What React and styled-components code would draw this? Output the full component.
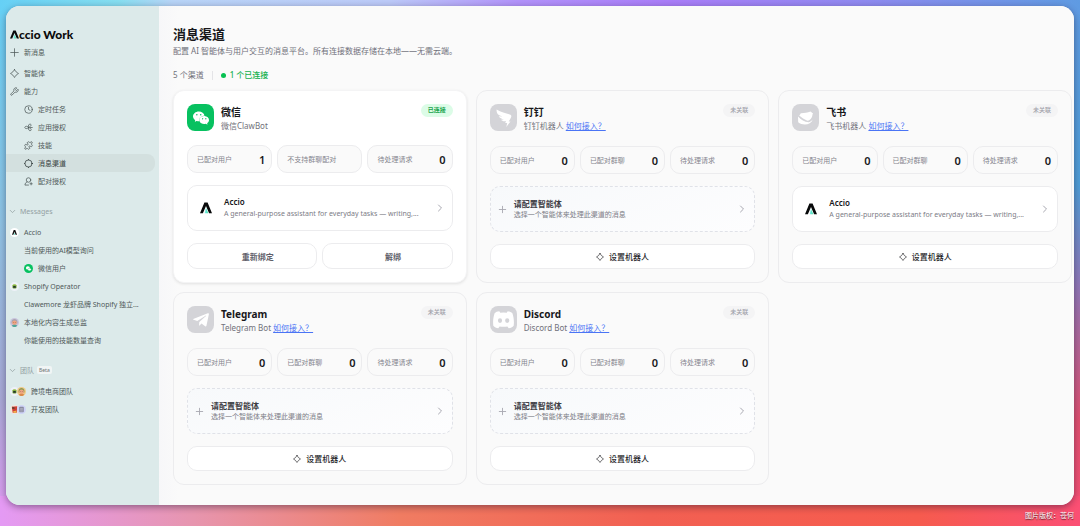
import React from 'react';
import styled, { createGlobalStyle, css } from 'styled-components';
import { ChevronDown, ChevronRight, Clock, Plus, Puzzle, Wrench } from 'lucide-react';
import { FaTelegramPlane } from 'react-icons/fa';
import { SiWechat } from 'react-icons/si';

const GlobalStyle = createGlobalStyle`
  * {
    box-sizing: border-box;
  }

  body {
    margin: 0;
    font-family: 'Noto Sans', 'Noto Sans CJK SC', sans-serif;
    font-size: 8px;
    color: #18181b;
  }

  button {
    font: inherit;
    color: inherit;
    cursor: pointer;
  }

  svg {
    display: block;
    flex: none;
  }

  h1, h2, p, ul {
    margin: 0;
    padding: 0;
  }
`;

const Desktop = styled.div`
  display: flex;
  flex-direction: column;
  min-height: 100vh;
  padding: 6px 6px 0;
  background:
    linear-gradient(90deg, #66d0f5 0%, #86def0 11%, #b8d4f7 16%, #bccaf8 36%, #b292fa 48%, #a97df8 62%, #8f8af0 80%, #5f9be2 100%) top / 100% 14px no-repeat,
    linear-gradient(90deg, #e49af4 0%, #e795ae 18%, #f07c62 37%, #f26052 60%, #f65b4e 85%, #fb4f74 100%) bottom / 100% 30px no-repeat,
    linear-gradient(180deg, #66d0f5 0%, #8fc4e4 42%, #a9a9d6 76%, #e49af4 100%) left / 50% 100% no-repeat,
    linear-gradient(180deg, #5f9be2 0%, #4f9fd8 35%, #8f78b8 54%, #e0506f 80%, #fb4f74 100%) right / 50% 100% no-repeat;
`;

const Window = styled.div`
  display: flex;
  flex: 1;
  overflow: hidden;
  border-radius: 14px;
  background: #fafafa;
  box-shadow: 0 2px 7px rgba(30, 20, 50, 0.45);
`;

const Credit = styled.footer`
  height: 21px;
  line-height: 21px;
  font-size: 7px;
  text-align: right;
  color: #fff;
  text-shadow: 0 1px 1px rgba(0, 0, 0, 0.7);
`;

const Sidebar = styled.nav`
  flex: none;
  width: 153px;
  padding: 20px 4px 12px 0;
  background: #dceaea;
`;

const Brand = styled.div`
  display: flex;
  align-items: center;
  height: 16px;
  margin-bottom: 1px;
  padding-left: 4px;
  font-family: Lato, 'Noto Sans', sans-serif;
  font-size: 12px;
  font-weight: 900;
  color: #0b0b0c;
`;

const NavGroup = styled.ul`
  list-style: none;
  margin-bottom: ${p => p.$gap || 3}px;
`;

const NavLink = styled.a`
  display: flex;
  align-items: center;
  gap: 5px;
  height: 18px;
  padding-left: ${p => (p.$level ? 18 : 4)}px;
  border-radius: 0 8px 8px 0;
  font-size: 7px;
  white-space: nowrap;
  text-decoration: none;
  color: #4f5959;

  ${p =>
    p.$active &&
    css`
      background: #d3e0df;
      color: #333c3c;
    `}
`;

const SectionButton = styled.button`
  display: flex;
  align-items: center;
  gap: 3px;
  height: 18px;
  margin-bottom: 3px;
  padding: 0 0 0 2px;
  border: 0;
  background: none;
  font-size: 7px;
  color: #93a0a2;
`;

const BetaTag = styled.span`
  padding: 0 2px;
  border-radius: 2px;
  background: #f1f5f5;
  font-size: 5px;
  line-height: 8px;
  color: #6b7272;
`;

const AvatarPair = styled.span`
  display: flex;

  svg + svg {
    margin-left: -2px;
  }
`;

const Main = styled.main`
  flex: 1;
  min-width: 0;
  padding: 19px 2px 20px 14px;
  background: linear-gradient(90deg, #f7f7f9, #fafafa 20px);
`;

const PageTitle = styled.h1`
  font-size: 13px;
  line-height: 18px;
  font-weight: 600;
`;

const PageIntro = styled.p`
  margin-top: 2px;
  line-height: 12px;
  color: #71717a;
`;

const Summary = styled.div`
  display: flex;
  align-items: center;
  margin: 12px 0 9px;
  line-height: 12px;
  color: #71717a;
`;

const Divider = styled.span`
  width: 1px;
  height: 9px;
  margin: 0 8px;
  background: #e4e4e7;
`;

const Connected = styled.span`
  display: flex;
  align-items: center;
  gap: 4px;
  font-weight: 500;
  color: #12b04c;

  &::before {
    content: '';
    width: 5px;
    height: 5px;
    border-radius: 50%;
    background: #07c152;
  }
`;

const Grid = styled.div`
  display: grid;
  grid-template-columns: repeat(3, minmax(0, 1fr));
  gap: 9px;
`;

const Card = styled.section`
  display: flex;
  flex-direction: column;
  gap: 12px;
  padding: 13px;
  border: 1px solid ${p => (p.$on ? '#f4f4f5' : '#ececee')};
  border-radius: 11px;
  background: ${p => (p.$on ? '#fff' : '#fafafa')};
  box-shadow: ${p => (p.$on ? '0 1px 3px rgba(0, 0, 0, 0.1)' : 'none')};
`;

const CardHeader = styled.header`
  display: flex;
  align-items: flex-start;
  gap: 7px;
`;

const Tile = styled.span`
  display: flex;
  align-items: center;
  justify-content: center;
  width: 27px;
  height: 27px;
  border-radius: 8px;
  background: ${p => (p.$on ? '#07c160' : '#d4d4d8')};
  color: #fff;
`;

const CardHeading = styled.div`
  flex: 1;
  min-width: 0;
`;

const CardTitle = styled.h2`
  font-size: 10px;
  line-height: 16px;
  font-weight: 700;
`;

const CardSub = styled.p`
  padding-bottom: ${p => (p.$linked ? 2 : 1)}px;
  line-height: 12px;
  color: #71717a;
`;

const HelpLink = styled.a`
  color: #4a74f5;
  text-decoration: underline;
`;

const Badge = styled.span`
  padding: 0 7px;
  border-radius: 7px;
  background: ${p => (p.$on ? '#dcfce7' : '#f4f4f5')};
  font-size: 6px;
  line-height: 13px;
  font-weight: ${p => (p.$on ? 700 : 500)};
  color: ${p => (p.$on ? '#16a34a' : '#a1a1aa')};
`;

const Stats = styled.div`
  display: grid;
  grid-template-columns: repeat(3, 1fr);
  gap: 5px;
`;

const Stat = styled.div`
  display: flex;
  align-items: center;
  justify-content: space-between;
  height: 28px;
  padding: 0 6px 0 9px;
  border: 1px solid #ececee;
  border-radius: 10px;
  background: #fafafa;
  font-size: 7px;
  color: #85858e;

  strong {
    font-size: 11px;
    font-weight: 600;
    color: #18181b;
  }
`;

const AgentButton = styled.button`
  display: flex;
  align-items: center;
  gap: ${p => (p.$empty ? 6 : 12)}px;
  height: 46px;
  padding: 0 6px 0 ${p => (p.$empty ? 6 : 12)}px;
  border: 1px ${p => (p.$empty ? 'dashed #e0e2e8' : 'solid #ececee')};
  border-radius: 10px;
  background: ${p => (p.$empty ? 'linear-gradient(160deg, #f7f9fb, #fdfdfe)' : '#fff')};
  text-align: left;
  color: #a8a8b1;
`;

const AgentText = styled.span`
  display: flex;
  flex: 1;
  flex-direction: column;
  min-width: 0;
  font-size: 7px;
  line-height: ${p => (p.$empty ? 11 : 12)}px;
  white-space: nowrap;
  color: #7c7c86;

  b {
    font-size: 8px;
    font-weight: 600;
    color: ${p => (p.$empty ? '#3f3f46' : '#18181b')};
  }
`;

const Actions = styled.div`
  display: flex;
  gap: 5px;
`;

const ActionButton = styled.button`
  display: flex;
  flex: 1;
  align-items: center;
  justify-content: center;
  gap: 5px;
  height: ${p => (p.$muted ? 26 : 25)}px;
  padding: 0 0 0 ${p => (p.$muted ? 11 : 0)}px;
  border: 1px solid #ececee;
  border-radius: 10px;
  background: #fff;
  font-weight: ${p => (p.$muted ? 600 : 500)};
  color: ${p => (p.$muted ? '#60606a' : '#27272a')};
`;

const AccioMark = ({ size = 12 }) => (
  <svg width={size} height={size} viewBox="0 0 24 24" aria-hidden="true">
    <defs>
      <linearGradient id="accio" x1="0" x2="1">
        <stop offset="0" stopColor="#7fe8f0" />
        <stop offset="1" stopColor="#3fe0a0" />
      </linearGradient>
    </defs>
    <path d="M8.800 1h6.400L24 22.500h-5.800L12 8 5.800 22.500H0z" fill="#08090a" />
    <path d="M12 11.500l4.600 11H9.400z" fill="url(#accio)" />
  </svg>
);

const StrokeIcon = ({ size = 9, width = 2, children }) => (
  <svg
    width={size}
    height={size}
    viewBox="0 0 24 24"
    fill="none"
    stroke="currentColor"
    strokeWidth={width}
    strokeLinecap="round"
    strokeLinejoin="round"
    aria-hidden="true"
  >
    {children}
  </svg>
);

const NewIcon = () => (
  <StrokeIcon>
    <path d="M12 2v20M2 12h20" />
  </StrokeIcon>
);

const AgentIcon = ({ size }) => (
  <StrokeIcon size={size}>
    <path d="M12 1.500c.8 0 1.200 1 1.700 2.300.9 2.500 4 5.600 6.500 6.500 1.300.5 2.300.9 2.300 1.700s-1 1.200-2.300 1.700c-2.500.9-5.600 4-6.500 6.500-.5 1.300-.9 2.300-1.700 2.300s-1.200-1-1.700-2.300c-.9-2.500-4-5.600-6.500-6.500-1.300-.5-2.300-.9-2.300-1.700s1-1.200 2.300-1.700c2.500-.9 5.600-4 6.500-6.500.5-1.300.9-2.300 1.700-2.300z" />
  </StrokeIcon>
);

const GrantIcon = () => (
  <StrokeIcon>
    <path d="M12 12C9 7 3 8 2 12c1 4 7 4 10 0zM12 12c-2-5 1-10 5-9 4 2 1 7-5 9zM12 12c6 1 9 5 6 8-4 2-7-2-6-8zM17 12h5" />
  </StrokeIcon>
);

const ChannelIcon = () => (
  <StrokeIcon>
    <circle cx="12" cy="12" r="9.500" />
    <path d="M12 1v1M12 22v1M1 12h1M22 12h1" />
  </StrokeIcon>
);

const PairIcon = () => (
  <StrokeIcon>
    <circle cx="12" cy="8" r="6" />
    <path d="M8 13c-3 1.500-5 4-5.500 8.500H12M19 15v6M16 18h6" />
  </StrokeIcon>
);

const TileIcon = ({ children }) => (
  <svg width="27" height="27" viewBox="0 0 27 27" fill="currentColor" aria-hidden="true">
    {children}
  </svg>
);

const DingTalkIcon = () => (
  <TileIcon>
    <path d="M6.600 5.400c4.300 2.500 9 3.700 13.200 5.200 1.500.6 1.800 1.300 1.300 2.600-.6 1.500-1.600 2.900-2.400 4.200h1.800l-4.200 5.600.9-4h-2l.9-2c-2 .6-3.800.2-5-1.200l2.900-.5c-2.400-.4-4.200-1.300-5.200-3.100l3.700.2C9.600 11.600 7.500 10.600 7 8.700c-.4-1-.5-2.200-.4-3.300z" />
  </TileIcon>
);

const FeishuIcon = () => (
  <TileIcon>
    <path d="M8.800 9.200c3.200.1 6.600-.8 9.700-1.700 1 .6 1.500 1.600 2.500 1.700-.7 1.500-.6 2.900-1.300 4.300-1 1.800-2.500 3-4.300 3.300C12 15.600 9 13 7.200 11.600c.7-.7 1.200-1.500 1.600-2.400z" />
    <path d="M6 12.500c3 3.300 6.600 5.500 10.500 5.700 1.700-.1 3.100-1.200 4.300-2.700-1.300 3.200-4.300 5-8 5-2.500 0-4.800-.7-6.600-2.200z" />
  </TileIcon>
);

const DiscordIcon = () => (
  <TileIcon>
    <path
      fillRule="evenodd"
      d="M9.300 5.300L10.300 6.800q3.200-.5 6.400 0l1-1.500c1.900.2 3.500.8 4.700 1.900 1.400 3.900 1.800 8.200 1.300 12.600-1.300 1.400-3 2.200-5 2.500l-1.300-1.900q-3.900.8-7.800 0l-1.300 1.900c-2-.3-3.700-1.100-5-2.500-.5-4.400-.1-8.700 1.300-12.600 1.200-1.100 2.800-1.700 4.700-1.900zM10 12.300a2.100 2.300 0 1 0 0 4.600 2.100 2.300 0 1 0 0-4.600zM17.200 12.300a2.100 2.300 0 1 0 0 4.600 2.100 2.300 0 1 0 0-4.600z"
    />
  </TileIcon>
);

const AccioAvatar = () => (
  <svg width="9" height="9" viewBox="0 0 18 18" aria-hidden="true">
    <circle cx="9" cy="9" r="9" fill="#fff" />
    <path d="M7.400 4h3.200l3.400 9.500h-2.800L9 7.500l-2.200 6H4z" fill="#111" />
    <path d="M9 9.500l1.500 4h-3z" fill="#5fdcc0" />
  </svg>
);

const OperatorAvatar = () => (
  <svg width="9" height="9" viewBox="0 0 20 20" aria-hidden="true">
    <circle cx="10" cy="10" r="10" fill="#eef1f8" />
    <path d="M5 9c0-5 10-5 10 0z" fill="#95bf47" />
    <rect x="5.500" y="7.500" width="9" height="7" rx="2.500" fill="#6e9d35" />
    <rect x="7" y="9" width="6" height="4" rx="1.500" fill="#24352b" />
  </svg>
);

const PersonAvatar = ({ hair = '#a9a4ad', shirt = '#4fa69b', back = '#c9c4dd' }) => (
  <svg width="9" height="9" viewBox="0 0 20 20" aria-hidden="true">
    <circle cx="10" cy="10" r="10" fill={back} />
    <path d="M3.500 9c0-9 13-9 13 0v3h-13z" fill={hair} />
    <circle cx="10" cy="10.500" r="5.200" fill="#efa583" />
    <path d="M4 17c2-3 10-3 12 0-3 4-9 4-12 0z" fill={shirt} />
    <path d="M7.500 10h1.500M11 10h1.500" stroke="#6b4638" />
  </svg>
);

const RedAvatar = () => (
  <svg width="9" height="9" viewBox="0 0 20 20" aria-hidden="true">
    <circle cx="10" cy="10" r="10" fill="#f5e4dc" />
    <path d="M4 4l12-1-1 14H6z" fill="#cf3f35" />
    <path d="M5 4l5 1v4H5z" fill="#6c4034" />
    <path d="M7 14l7-2v5H8z" fill="#efb64b" />
  </svg>
);

const BotAvatar = () => (
  <svg width="9" height="9" viewBox="0 0 20 20" aria-hidden="true">
    <circle cx="10" cy="10" r="10" fill="#cfd3f7" />
    <rect x="5" y="4" width="10" height="12" rx="1.500" fill="#85869c" />
    <path d="M7 7.500h6M7 10.500h6M7 13.500h6" stroke="#e4e4ee" />
  </svg>
);

const WechatAvatar = () => (
  <svg width="9" height="9" viewBox="0 0 18 18" aria-hidden="true">
    <circle cx="9" cy="9" r="9" fill="#07c160" />
    <ellipse cx="7.800" cy="7.800" rx="4" ry="3.400" fill="#fff" />
    <ellipse cx="11" cy="11" rx="3.300" ry="2.700" fill="#fff" stroke="#07c160" strokeWidth=".7" />
  </svg>
);

const thin = { size: 9, strokeWidth: 2 };

const MenuItems = [
  { text: '智能体', icon: <AgentIcon /> },
  { text: '能力', icon: <Wrench {...thin} /> },
  { text: '定时任务', icon: <Clock {...thin} />, level: 1 },
  { text: '应用授权', icon: <GrantIcon />, level: 1 },
  { text: '技能', icon: <Puzzle {...thin} />, level: 1 },
  { text: '消息渠道', icon: <ChannelIcon />, level: 1, active: true },
  { text: '配对授权', icon: <PairIcon />, level: 1 },
];

const MessageItems = [
  { text: 'Accio', icon: <AccioAvatar /> },
  { text: '当前使用的AI模型询问', level: 1 },
  { text: '微信用户', icon: <WechatAvatar />, level: 1 },
  { text: 'Shopify Operator', icon: <OperatorAvatar /> },
  { text: 'Clawemore 龙虾品牌 Shopify 独立...', level: 1 },
  { text: '本地化内容生成总监', icon: <PersonAvatar /> },
  { text: '你能使用的技能数量查询', level: 1 },
];

const TeamItems = [
  {
    text: '跨境电商团队',
    icon: (
      <AvatarPair>
        <OperatorAvatar />
        <PersonAvatar hair="#8d9a52" shirt="#d98a4c" back="#f0c987" />
      </AvatarPair>
    ),
  },
  {
    text: '开发团队',
    icon: (
      <AvatarPair>
        <RedAvatar />
        <BotAvatar />
      </AvatarPair>
    ),
  },
];

const channels = [
  { name: '微信', sub: '微信ClawBot', icon: <SiWechat size={16} />, connected: true, agent: true },
  { name: '钉钉', sub: '钉钉机器人', icon: <DingTalkIcon /> },
  { name: '飞书', sub: '飞书机器人', icon: <FeishuIcon />, agent: true },
  { name: 'Telegram', sub: 'Telegram Bot', icon: <FaTelegramPlane size={18} /> },
  { name: 'Discord', sub: 'Discord Bot', icon: <DiscordIcon /> },
];

const NavList = ({ items, gap }) => (
  <NavGroup $gap={gap}>
    {items.map(item => (
      <li key={item.text}>
        <NavLink
          href="#"
          $level={item.level}
          $active={item.active}
          aria-current={item.active ? 'page' : undefined}
        >
          {item.icon}
          {item.text}
        </NavLink>
      </li>
    ))}
  </NavGroup>
);

const Agent = ({ assigned }) =>
  assigned ? (
    <AgentButton type="button">
      <AccioMark size={12} />
      <AgentText>
        <b>Accio</b>
        <span>A general-purpose assistant for everyday tasks — writing,...</span>
      </AgentText>
      <ChevronRight size={12} strokeWidth={2} />
    </AgentButton>
  ) : (
    <AgentButton type="button" $empty>
      <Plus size={11} strokeWidth={2} />
      <AgentText $empty>
        <b>请配置智能体</b>
        <span>选择一个智能体来处理此渠道的消息</span>
      </AgentText>
      <ChevronRight size={12} strokeWidth={2} />
    </AgentButton>
  );

const ChannelCard = ({ name, sub, icon, connected, agent }) => (
  <Card $on={connected}>
    <CardHeader>
      <Tile $on={connected}>{icon}</Tile>
      <CardHeading>
        <CardTitle>{name}</CardTitle>
        <CardSub $linked={!connected}>
          {sub} {!connected && <HelpLink href="#">如何接入？</HelpLink>}
        </CardSub>
      </CardHeading>
      <Badge $on={connected}>{connected ? '已连接' : '未关联'}</Badge>
    </CardHeader>
    <Stats>
      <Stat>
        已配对用户 <strong>{connected ? 1 : 0}</strong>
      </Stat>
      {connected ? (
        <Stat>不支持群聊配对</Stat>
      ) : (
        <Stat>
          已配对群聊 <strong>0</strong>
        </Stat>
      )}
      <Stat>
        待处理请求 <strong>0</strong>
      </Stat>
    </Stats>
    <Agent assigned={agent} />
    {connected ? (
      <Actions>
        <ActionButton type="button" $muted>
          重新绑定
        </ActionButton>
        <ActionButton type="button" $muted>
          解绑
        </ActionButton>
      </Actions>
    ) : (
      <Actions>
        <ActionButton type="button">
          <AgentIcon size={8} />
          设置机器人
        </ActionButton>
      </Actions>
    )}
  </Card>
);

const App = () => (
  <>
    <GlobalStyle />
    <Desktop>
      <Window>
        <Sidebar>
          <Brand aria-label="Accio Work">
            <AccioMark size={9} />
            ccio Work
          </Brand>
          <NavList items={[{ text: '新消息', icon: <NewIcon /> }]} />
          <NavList items={MenuItems} gap={12} />
          <SectionButton type="button">
            <ChevronDown size={9} />
            Messages
          </SectionButton>
          <NavList items={MessageItems} gap={12} />
          <SectionButton type="button">
            <ChevronDown size={9} />
            团队
            <BetaTag>Beta</BetaTag>
          </SectionButton>
          <NavList items={TeamItems} />
        </Sidebar>
        <Main>
          <PageTitle>消息渠道</PageTitle>
          <PageIntro>
            配置 AI 智能体与用户交互的消息平台。所有连接数据存储在本地——无需云端。
          </PageIntro>
          <Summary>
            5 个渠道
            <Divider />
            <Connected>1 个已连接</Connected>
          </Summary>
          <Grid>
            {channels.map(channel => (
              <ChannelCard key={channel.name} {...channel} />
            ))}
          </Grid>
        </Main>
      </Window>
      <Credit>图片版权：苍何</Credit>
    </Desktop>
  </>
);

export default App;
